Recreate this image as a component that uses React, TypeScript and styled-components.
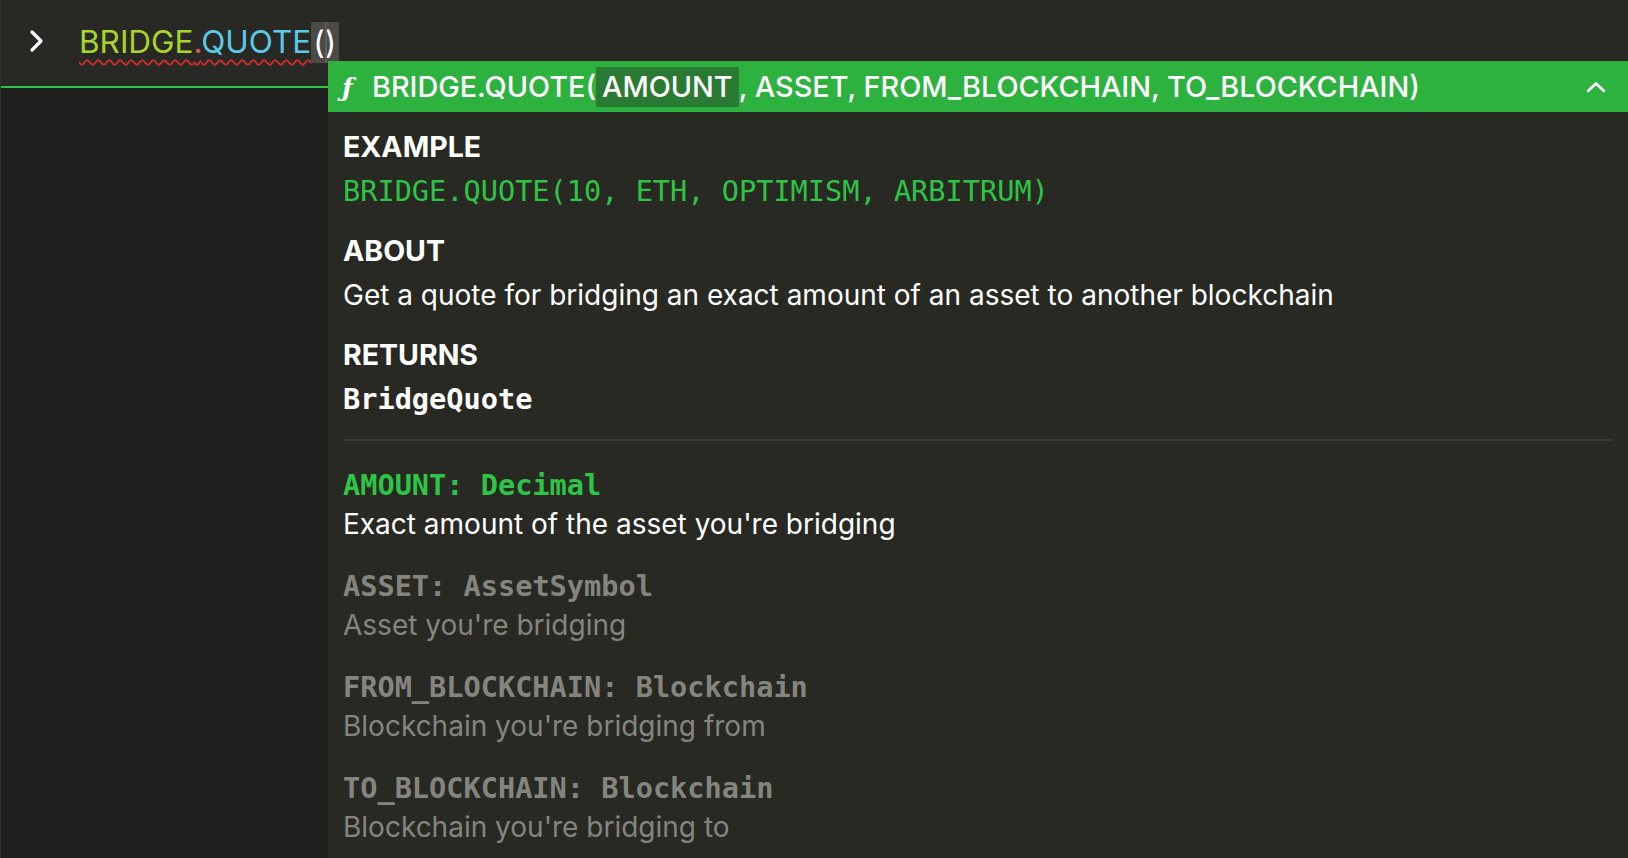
import React from "react";
import styled, { createGlobalStyle } from "styled-components";

const Global = createGlobalStyle`
  html, body { margin: 0; padding: 0; background: #1e1e1c; }
  body { width: 1628px; height: 858px; overflow: hidden; }
  #root { height: 858px; }
`;

const SANS = `Inter, "Noto Sans", "Liberation Sans", sans-serif`;
const MONO = `"DejaVu Sans Mono", "Liberation Mono", monospace`;

const Page = styled.div`
  position: relative;
  width: 1628px;
  height: 858px;
  background: #1e1e1c;
  border-left: 1px solid #34342f;
  box-sizing: border-box;
  overflow: hidden;
  font-family: ${SANS};
`;

const InputBar = styled.div`
  height: 86px;
  background: #282824;
  border-bottom: 2px solid #2ec445;
  display: flex;
  align-items: center;
  padding-left: 28px;
  gap: 34px;
`;

const Prompt = styled.svg`
  width: 16px;
  height: 24px;
  margin-top: -4px;
`;

const Formula = styled.div`
  display: flex;
  align-items: center;
  font-size: 31.5px;
  font-weight: 400;
  margin-top: -3px;
`;

const Squiggle = styled.span`
  text-decoration: underline wavy #d22c2c;
  text-decoration-thickness: 1.5px;
  text-underline-offset: 6px;
`;

const Tok = styled.span<{ $c: string }>`
  color: ${(p) => p.$c};
`;

const Brackets = styled.span`
  position: relative;
  display: inline-block;
  color: #ffffff;
  background: #4a4a47;
  padding: 0 3px 0 2px;
  line-height: 41px;
  height: 41px;
  margin-top: 2px;
`;

const Caret = styled.span`
  position: absolute;
  left: 14px;
  top: 0;
  bottom: 0;
  width: 2px;
  background: #5e5e5a;
`;

const Popup = styled.div`
  position: absolute;
  left: 327px;
  top: 61px;
  right: 0;
  bottom: 0;
  background: #292924;
  display: flex;
  flex-direction: column;
`;

const Header = styled.div`
  height: 51px;
  flex: none;
  background: #2db240;
  display: flex;
  align-items: center;
  padding: 0 22px 0 14px;
  color: #fff;
  font-size: 28.8px;
  font-weight: 500;
`;

const FnIcon = styled.span`
  font-family: "DejaVu Serif", "Liberation Serif", serif;
  font-style: italic;
  font-size: 25px;
  font-weight: 700;
  width: 30px;
  margin-top: 2px;
`;

const Signature = styled.div`
  flex: 1;
  display: flex;
  align-items: center;
  white-space: pre;
`;

const ActiveArg = styled.span`
  background: #2a7a33;
  padding: 4px 6px;
  line-height: 32px;
`;

const Collapse = styled.svg`
  width: 20px;
  height: 12px;
`;

const Body = styled.div`
  padding: 13px 14px 0 15px;
  display: flex;
  flex-direction: column;
`;

const Sections = styled.div`
  display: flex;
  flex-direction: column;
  gap: 16px;
`;

const Section = styled.div`
  display: flex;
  flex-direction: column;
`;

const Heading = styled.div`
  font-size: 28.5px;
  font-weight: 700;
  color: #ffffff;
  line-height: 44px;
`;

const Code = styled.div<{ $c: string; $bold?: boolean }>`
  font-family: ${MONO};
  font-size: 28.6px;
  font-weight: ${(p) => (p.$bold ? 700 : 400)};
  color: ${(p) => p.$c};
  line-height: 44px;
  white-space: pre;
`;

const Prose = styled.div<{ $c: string; $lh?: number }>`
  font-size: 28px;
  color: ${(p) => p.$c};
  line-height: ${(p) => p.$lh ?? 39}px;
`;

const Divider = styled.hr`
  border: none;
  height: 2px;
  background: #3a3a35;
  margin: 18px 0 25px;
`;

const Params = styled.div`
  display: flex;
  flex-direction: column;
  gap: 23px;
`;

const Param = styled.div`
  display: flex;
  flex-direction: column;
`;

const ParamName = styled.div<{ $c: string }>`
  font-family: ${MONO};
  font-size: 28.6px;
  font-weight: 700;
  color: ${(p) => p.$c};
  line-height: 39px;
  white-space: pre;
`;

const params = [
  { name: "AMOUNT", type: "Decimal", desc: "Exact amount of the asset you're bridging", active: true },
  { name: "ASSET", type: "AssetSymbol", desc: "Asset you're bridging", active: false },
  { name: "FROM_BLOCKCHAIN", type: "Blockchain", desc: "Blockchain you're bridging from", active: false },
  { name: "TO_BLOCKCHAIN", type: "Blockchain", desc: "Blockchain you're bridging to", active: false },
];

export default function App() {
  return (
    <>
      <Global />
      <Page>
        <InputBar>
          <Prompt viewBox="0 0 16 24">
            <path d="M3 3 L12 12 L3 21" fill="none" stroke="#fff" strokeWidth="3.2" strokeLinecap="round" strokeLinejoin="round" />
          </Prompt>
          <Formula>
            <Squiggle>
              <Tok $c="#a8d52c">BRIDGE</Tok>
              <Tok $c="#e05252">.</Tok>
              <Tok $c="#5ccae6">QUOTE</Tok>
            </Squiggle>
            <Brackets>
              ()
              <Caret />
            </Brackets>
          </Formula>
        </InputBar>

        <Popup>
          <Header>
            <FnIcon>ƒ</FnIcon>
            <Signature>
              BRIDGE.QUOTE(<ActiveArg>AMOUNT</ActiveArg>, ASSET, FROM_BLOCKCHAIN, TO_BLOCKCHAIN)
            </Signature>
            <Collapse viewBox="0 0 20 12">
              <path d="M2 10 L10 2.5 L18 10" fill="none" stroke="#fff" strokeWidth="2.6" strokeLinecap="round" strokeLinejoin="round" />
            </Collapse>
          </Header>
          <Body>
            <Sections>
              <Section>
                <Heading>EXAMPLE</Heading>
                <Code $c="#2ec445">BRIDGE.QUOTE(10, ETH, OPTIMISM, ARBITRUM)</Code>
              </Section>
              <Section>
                <Heading>ABOUT</Heading>
                <Prose $c="#ffffff" $lh={44}>Get a quote for bridging an exact amount of an asset to another blockchain</Prose>
              </Section>
              <Section>
                <Heading>RETURNS</Heading>
                <Code $c="#ffffff" $bold>BridgeQuote</Code>
              </Section>
            </Sections>
            <Divider />
            <Params>
              {params.map((p) => (
                <Param key={p.name}>
                  <ParamName $c={p.active ? "#2ec445" : "#85857f"}>
                    {p.name}: {p.type}
                  </ParamName>
                  <Prose $c={p.active ? "#ffffff" : "#85857f"}>{p.desc}</Prose>
                </Param>
              ))}
            </Params>
          </Body>
        </Popup>
      </Page>
    </>
  );
}
